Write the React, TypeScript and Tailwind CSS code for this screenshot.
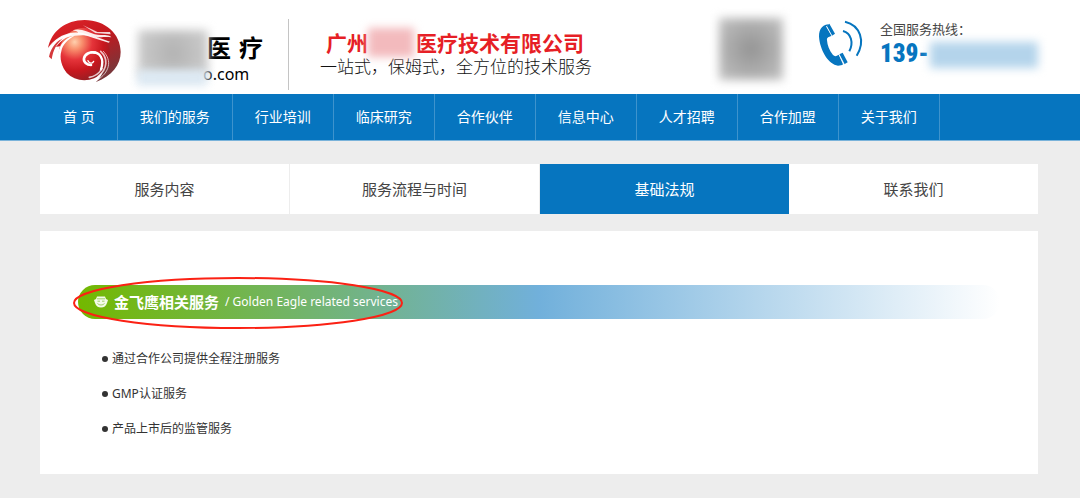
const navItems = ['首 页', '我们的服务', '行业培训', '临床研究', '合作伙伴', '信息中心', '人才招聘', '合作加盟', '关于我们']

const tabs = ['服务内容', '服务流程与时间', '基础法规', '联系我们']

const services = ['通过合作公司提供全程注册服务', 'GMP认证服务', '产品上市后的监管服务']

function Logo() {
  return (
    <svg viewBox="0 0 258 222" className="w-[86px] h-[74px] shrink-0" role="img" aria-label="Logo">
      <defs>
        <radialGradient id="ball" gradientUnits="userSpaceOnUse" cx="98" cy="84" r="140">
          <stop offset="0" stopColor="#ffd0ae" />
          <stop offset="0.16" stopColor="#f9906e" />
          <stop offset="0.38" stopColor="#e5343a" />
          <stop offset="0.62" stopColor="#c8171e" />
          <stop offset="1" stopColor="#7b2327" />
        </radialGradient>
        <linearGradient id="shell" x1="0" y1="0" x2="0.6" y2="1">
          <stop offset="0" stopColor="#e2262b" />
          <stop offset="0.5" stopColor="#c4181e" />
          <stop offset="1" stopColor="#79363a" />
        </linearGradient>
      </defs>
      <path
        d="M18 102 C28 52 70 18 128 18 C190 18 236 60 236 114 C236 152 210 186 162 204 C176 190 182 180 184 166 L60 96 Z"
        fill="url(#shell)"
      />
      <ellipse cx="127" cy="120" rx="77" ry="79" fill="url(#ball)" />
      <path d="M16 104 C36 78 66 60 96 58 C70 70 34 92 22 143 C14 130 14 118 16 104 Z" fill="#fff" />
      <path d="M21 128 C28 98 44 82 66 70 C42 90 34 108 29 136 Z" fill="#d5383b" />
      <path d="M50 110 C58 84 74 70 100 64 C76 78 62 92 58 112 C52 132 58 158 76 180 C48 162 44 130 50 110 Z" fill="#fff" />
      <path d="M24 94 C48 64 84 50 122 57 L150 66 C112 60 64 66 24 94 Z" fill="#fff" opacity="0.9" />
      <path
        d="M92 49 C116 41 136 54 158 61 C174 66 186 60 204 66 L208 70 C188 68 176 71 162 68 L204 83 L200 86 L152 71 C134 65 118 60 104 60 C112 57 108 52 92 49 Z"
        fill="#fff"
        opacity="0.9"
      />
      <path d="M122 33 L160 57 L206 61 L204 54 L166 54 Z" fill="#fff" opacity="0.8" />
      <g fill="none" stroke="#fff" strokeLinecap="round">
        <path d="M147 153 C134 153 124 144 126 133 C129 119 146 112 160 116" strokeWidth="8" />
        <path d="M138 140 C142 149 152 150 155 142" strokeWidth="4" />
        <path d="M148 115 C174 113 188 134 177 166" strokeWidth="7" />
        <path d="M176 112 C198 132 198 164 168 188" strokeWidth="5" opacity="0.75" />
        <path d="M184 112 C212 140 202 176 166 198" strokeWidth="3" opacity="0.65" />
        <path d="M142 190 C158 188 170 180 180 164" strokeWidth="5" opacity="0.75" />
      </g>
    </svg>
  )
}

function PhoneIcon() {
  return (
    <svg viewBox="0 0 180 180" className="w-[60px] h-[60px] shrink-0" fill="#0675bf" aria-hidden="true">
      <path d="M55 31 C33 34 24 51 28 77 C33 112 56 151 84 155 C91 155 96 154 99 151 L86 122 C80 126 75 129 69 123 C58 111 52 93 51 79 C50 70 55 69 65 66 L49 38 Z" />
      <path d="M50 35 L58 29 L75 59 L66 65 Z" />
      <path d="M88 121 L98 116 L113 145 L103 151 Z" />
      <path d="M49 36 L66 66 M87 121 L103 151" stroke="#fff" strokeWidth="2" />
      <path d="M99 51 C124 57 131 87 118 112" fill="none" stroke="#0675bf" strokeWidth="6" />
      <path d="M105 23 C151 34 167 82 140 125" fill="none" stroke="#0675bf" strokeWidth="6" />
    </svg>
  )
}

function BadgeIcon() {
  return (
    <svg viewBox="0 0 14 12" className="w-[14px] h-3 shrink-0" aria-hidden="true">
      <path d="M3 0.5 H11 L12 3 L14 4 L13 7 C12 10 10 11.5 7 11.5 C4 11.5 2 10 1 7 L0 4 L2 3 Z" fill="#f4fae9" />
      <path d="M3 2.8 H11 M3.5 5.2 H6 M8 5.2 H10.5 M3.5 7.4 C5 9.5 9 9.5 10.5 7.4" fill="none" stroke="#8cc44a" strokeWidth="0.8" />
    </svg>
  )
}

function Header() {
  return (
    <header className="flex h-[94px] items-start overflow-hidden bg-white pl-[42px] pr-[38px]">
      <div className="mt-[14px] flex">
        <Logo />
        <div className="relative mt-4 w-[140px] pl-[75px] text-black">
          <p className="flex gap-2 pl-1 text-2xl leading-9 font-bold">
            <span>医</span>
            <span>疗</span>
          </p>
          <p className="text-base leading-4">o.com</p>
          <div className="absolute top-0 left-[10px] h-[46px] w-[70px] bg-[radial-gradient(circle,#b2b2b2,#cfcfcf)] blur-[5px]" />
          <div className="absolute top-[40px] left-[9px] h-[16px] w-[70px] bg-[#dce9f3] blur-[4px]" />
        </div>
      </div>
      <div className="mt-[19px] ml-5 h-[71px] w-px shrink-0 bg-[#c4c4c4]" />
      <div className="mt-[30px] ml-[31px] shrink-0">
        <h1 className="relative pl-[6px] text-[21px] leading-[26px] font-bold text-[#e61f26]">
          广州
          <span className="inline-block w-[48px]" />
          医疗技术有限公司
          <span className="absolute -top-[2px] left-[48px] h-[29px] w-[46px] bg-[#f3babd] blur-[4px]" />
        </h1>
        <p className="text-[17px] leading-[22px] font-light text-[#111]">一站式，保姆式，全方位的技术服务</p>
      </div>
      <div className="mt-[18px] mr-[27px] ml-auto h-[62px] w-[64px] shrink-0 bg-[radial-gradient(circle,#949494,#c4c4c4)] blur-[5px]" />
      <div className="mt-[14px] flex shrink-0">
        <PhoneIcon />
        <div className="relative w-[172px] pt-[5px] pl-[10px]">
          <p className="text-[13px] leading-5 text-[#444]">全国服务热线：</p>
          <p className="font-['Roboto_Condensed',Roboto,sans-serif] text-[25px] leading-[30px] font-black text-[#0675bf]">
            139-
          </p>
          <div className="absolute top-[28px] left-[60px] h-[26px] w-[108px] bg-[#b4d4eb] blur-[5px]" />
        </div>
      </div>
    </header>
  )
}

export default function App() {
  return (
    <div className="min-h-screen bg-[#ededed] font-['Noto_Sans','Noto_Sans_CJK_SC',sans-serif] text-[#333]">
      <Header />

      <nav className="border-b border-[#7ab3da] bg-[#0675bf] px-[41px]">
        <ul className="flex">
          {navItems.map((item) => (
            <li key={item} className="border-r border-[#3d93cd]">
              <a href="#" className="block px-[22px] text-[14px] leading-[46px] whitespace-nowrap text-white">
                {item}
              </a>
            </li>
          ))}
        </ul>
      </nav>

      <main className="pt-[23px] pr-[42px] pb-6 pl-10">
        <div className="flex">
          {tabs.map((tab) => (
            <a
              key={tab}
              href="#"
              className={
                tab === '基础法规'
                  ? 'flex-1 bg-[#0675bf] text-center text-[15px] leading-[50px] text-white'
                  : 'flex-1 border-r border-[#ededed] bg-white text-center text-[15px] leading-[50px] text-[#444] last:border-r-0'
              }
            >
              {tab}
            </a>
          ))}
        </div>

        <section className="mt-[17px] bg-white px-[38px] pt-[54px] pb-[28px]">
          <div className="relative flex h-[34px] items-center rounded-full bg-[linear-gradient(to_right,#73b800,#71b0db_50%,#ffffff)] pl-4 text-white">
            <BadgeIcon />
            <h2 className="ml-[6px] text-[15px] leading-5 font-bold">金飞鹰相关服务</h2>
            <span className="ml-[6px] text-[12px] leading-5">/ Golden Eagle related services</span>
            <svg viewBox="0 0 332 54" className="absolute -top-[9px] -left-[5px] h-[54px] w-[332px]" aria-hidden="true">
              <ellipse cx="165" cy="27" rx="164" ry="25" fill="none" stroke="#fb2114" strokeWidth="2" />
            </svg>
          </div>

          <ul className="mt-[22px] pl-6">
            {services.map((service) => (
              <li key={service} className="flex items-center gap-1 text-[12px] leading-[35px]">
                <span className="size-[6px] rounded-full bg-[#333]" />
                {service}
              </li>
            ))}
          </ul>
        </section>
      </main>
    </div>
  )
}
